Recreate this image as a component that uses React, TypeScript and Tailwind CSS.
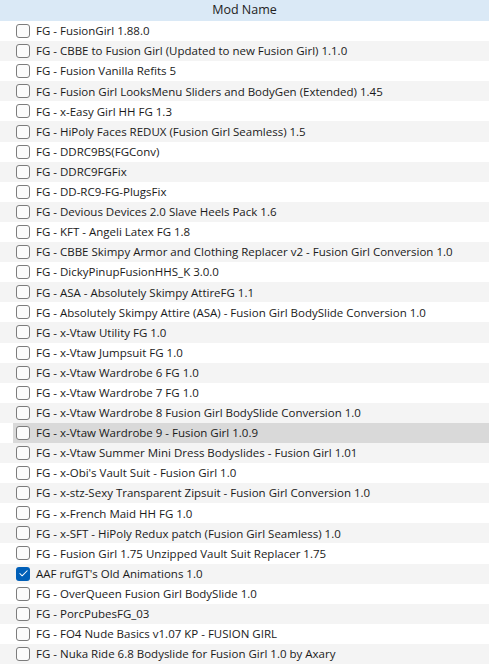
import { Check } from "lucide-react";

const mods: string[] = [
  "FG - FusionGirl 1.88.0",
  "FG - CBBE to Fusion Girl (Updated to new Fusion Girl) 1.1.0",
  "FG - Fusion Vanilla Refits 5",
  "FG - Fusion Girl LooksMenu Sliders and BodyGen (Extended) 1.45",
  "FG - x-Easy Girl HH FG 1.3",
  "FG - HiPoly Faces REDUX (Fusion Girl Seamless) 1.5",
  "FG - DDRC9BS(FGConv)",
  "FG - DDRC9FGFix",
  "FG - DD-RC9-FG-PlugsFix",
  "FG - Devious Devices 2.0 Slave Heels Pack 1.6",
  "FG - KFT - Angeli Latex FG 1.8",
  "FG - CBBE Skimpy Armor and Clothing Replacer v2 - Fusion Girl Conversion 1.0",
  "FG - DickyPinupFusionHHS_K 3.0.0",
  "FG - ASA - Absolutely Skimpy AttireFG 1.1",
  "FG - Absolutely Skimpy Attire (ASA) - Fusion Girl BodySlide Conversion 1.0",
  "FG - x-Vtaw Utility FG 1.0",
  "FG - x-Vtaw Jumpsuit FG 1.0",
  "FG - x-Vtaw Wardrobe 6 FG 1.0",
  "FG - x-Vtaw Wardrobe 7 FG 1.0",
  "FG - x-Vtaw Wardrobe 8 Fusion Girl BodySlide Conversion 1.0",
  "FG - x-Vtaw Wardrobe 9 - Fusion Girl 1.0.9",
  "FG - x-Vtaw Summer Mini Dress Bodyslides - Fusion Girl 1.01",
  "FG - x-Obi's Vault Suit - Fusion Girl 1.0",
  "FG - x-stz-Sexy Transparent Zipsuit - Fusion Girl Conversion 1.0",
  "FG - x-French Maid HH FG 1.0",
  "FG - x-SFT - HiPoly Redux patch (Fusion Girl Seamless) 1.0",
  "FG - Fusion Girl 1.75 Unzipped Vault Suit Replacer 1.75",
  "AAF rufGT's Old Animations 1.0",
  "FG - OverQueen Fusion Girl BodySlide 1.0",
  "FG - PorcPubesFG_03",
  "FG - FO4 Nude Basics v1.07 KP - FUSION GIRL",
  "FG - Nuka Ride 6.8 Bodyslide for Fusion Girl 1.0 by Axary",
];

const CHECKED = 27;
const HOVERED = 20;

function Box({ on }: { on: boolean }) {
  if (on) {
    return (
      <span className="flex h-[14px] w-[14px] shrink-0 items-center justify-center rounded-[3px] bg-[#005fb8]">
        <Check className="h-[11px] w-[11px] text-white" strokeWidth={2.2} />
      </span>
    );
  }
  return (
    <span className="h-[14px] w-[14px] shrink-0 rounded-[3px] border border-[#7c7c7c] bg-[#fbfbfb]" />
  );
}

export default function App() {
  return (
    <div className="w-[489px] h-[669px] overflow-hidden bg-white font-['Open_Sans',sans-serif] text-[11.5px] text-[#1a1a1a]">
      <div className="flex h-[21px] items-center justify-center bg-[#dae9f6] text-[12.5px] text-[#222]">
        Mod Name
      </div>
      {mods.map((name, i) => (
        <div
          key={i}
          className={`flex h-[20.1px] items-center ${i % 2 === 1 ? "bg-[#f4f4f4]" : "bg-white"}`}
        >
          <div
            className={
              i === HOVERED
                ? "ml-[13px] flex h-full flex-1 items-center gap-[6px] bg-[#d9d9d9] pl-[3px]"
                : "flex h-full flex-1 items-center gap-[6px] pl-[16px]"
            }
          >
            <Box on={i === CHECKED} />
            <span className="whitespace-nowrap leading-none">{name}</span>
          </div>
        </div>
      ))}
    </div>
  );
}
